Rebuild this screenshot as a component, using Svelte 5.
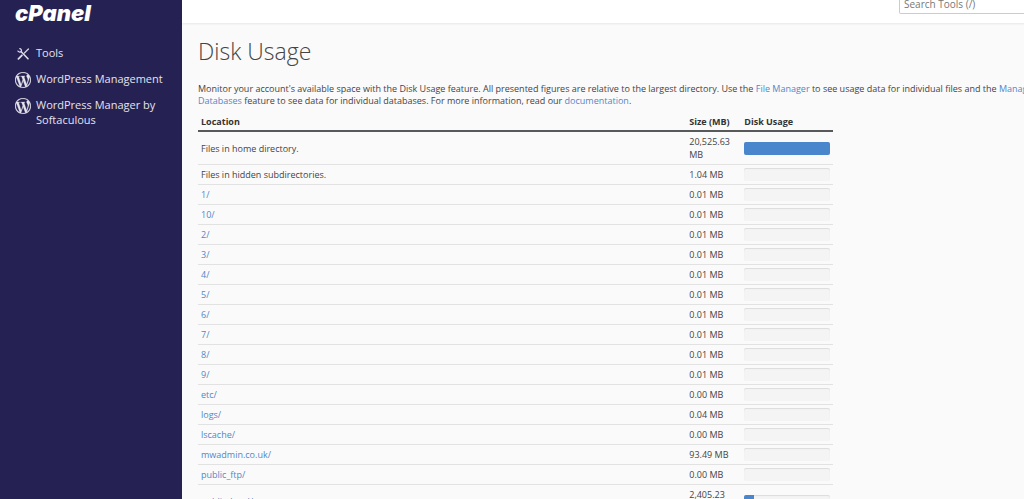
<script lang="ts">
  interface Usage {
    name: string;
    size: string;
    percent: number;
    link: boolean;
  }

  const dir = (name: string, size: string, percent = 0): Usage => ({ name, size, percent, link: true });

  const rows: Usage[] = [
    { name: 'Files in home directory.', size: '20,525.63 MB', percent: 100, link: false },
    { name: 'Files in hidden subdirectories.', size: '1.04 MB', percent: 0, link: false },
    dir('1/', '0.01 MB'),
    dir('10/', '0.01 MB'),
    dir('2/', '0.01 MB'),
    dir('3/', '0.01 MB'),
    dir('4/', '0.01 MB'),
    dir('5/', '0.01 MB'),
    dir('6/', '0.01 MB'),
    dir('7/', '0.01 MB'),
    dir('8/', '0.01 MB'),
    dir('9/', '0.01 MB'),
    dir('etc/', '0.00 MB'),
    dir('logs/', '0.04 MB'),
    dir('lscache/', '0.00 MB'),
    dir('mwadmin.co.uk/', '93.49 MB'),
    dir('public_ftp/', '0.00 MB'),
    dir('public_html/', '2,405.23 MB', 11.7)
  ];

  const nav = [
    { label: 'Tools', icon: 'tools' },
    { label: 'WordPress Management', icon: 'wordpress' },
    { label: 'WordPress Manager by Softaculous', icon: 'wordpress' }
  ];

  let search = $state('');
</script>

<div class="layout">
  <aside>
    <a class="logo" href="#home">cPanel</a>
    <nav>
      {#each nav as item}
        <a href="#{item.icon}">
          {#if item.icon === 'tools'}
            <svg class="icon" viewBox="0 0 16 16" aria-hidden="true">
              <g fill="none" stroke="#dcdbe6" stroke-linecap="round">
                <path d="M4.8 2.6c1.4.5 2 1.7 1.5 2.9-.8.9-2.2.8-3.3-.4" stroke-width="1.3" />
                <path d="M6.2 5.8l6.8 7" stroke-width="1.6" />
                <path d="M13.4 3L9.4 7" stroke-width="1.2" />
                <path d="M6.9 9.3l-3.5 3.5" stroke-width="1.8" />
              </g>
            </svg>
          {:else}
            <svg class="icon" viewBox="0 0 24 24" aria-hidden="true">
              <path fill="#e4e3ec" stroke="#e4e3ec" stroke-width=".4" d="M21.469 6.825c.84 1.537 1.318 3.3 1.318 5.175 0 3.979-2.156 7.456-5.363 9.325l3.295-9.527c.615-1.54.82-2.771.82-3.864 0-.405-.026-.78-.07-1.11m-7.981.105c.647-.03 1.232-.105 1.232-.105.582-.075.514-.93-.067-.899 0 0-1.755.135-2.88.135-1.064 0-2.85-.15-2.85-.15-.585-.03-.661.855-.075.885 0 0 .54.061 1.125.09l1.68 4.605-2.37 7.08L5.354 6.9c.649-.03 1.234-.1 1.234-.1.585-.075.516-.93-.065-.896 0 0-1.746.138-2.874.138-.2 0-.438-.008-.69-.015C4.911 3.15 8.235 1.215 12 1.215c2.809 0 5.365 1.072 7.286 2.833-.046-.003-.091-.009-.141-.009-1.06 0-1.812.923-1.812 1.914 0 .89.513 1.643 1.06 2.531.411.72.89 1.643.89 2.977 0 .915-.354 1.994-.821 3.479l-1.075 3.585-3.9-11.61.001.014zM12 22.784c-1.059 0-2.081-.153-3.048-.437l3.237-9.406 3.315 9.087c.024.053.05.101.078.149-1.12.393-2.325.609-3.582.609M1.211 12c0-1.564.336-3.05.935-4.39L7.29 21.709C3.694 19.96 1.212 16.271 1.211 12M12 0C5.385 0 0 5.385 0 12s5.385 12 12 12 12-5.385 12-12S18.615 0 12 0" />
            </svg>
          {/if}
          <span>{item.label}</span>
        </a>
      {/each}
    </nav>
  </aside>

  <div class="page">
    <header>
      <input type="text" aria-label="Search Tools" placeholder="Search Tools (/)" bind:value={search} />
    </header>

    <main>
      <h1>Disk Usage</h1>
      <p>
        Monitor your account's available space with the Disk Usage feature. All presented figures are relative to the
        largest directory. Use the <a href="#files">File Manager</a> to see usage data for individual files and the
        <a href="#databases">Manage My Databases</a> feature to see data for individual databases. For more information,
        read our <a href="#docs">documentation</a>.
      </p>

      <table>
        <thead>
          <tr>
            <th>Location</th>
            <th class="size">Size (MB)</th>
            <th class="usage">Disk Usage</th>
          </tr>
        </thead>
        <tbody>
          {#each rows as row}
            <tr>
              <td>
                {#if row.link}<a href="#{row.name}">{row.name}</a>{:else}{row.name}{/if}
              </td>
              <td>{row.size}</td>
              <td>
                <div class="bar">
                  {#if row.percent > 0}
                    <div class="fill" style="width: {row.percent}%"></div>
                  {/if}
                </div>
              </td>
            </tr>
          {/each}
        </tbody>
      </table>
    </main>
  </div>
</div>

<style>
  :global(body) {
    overflow: hidden;
    background: #fafafa;
  }
  .layout {
    display: flex;
    min-width: 1060px;
    min-height: 100vh;
    font-family: "Open Sans", sans-serif;
    font-size: 9px;
    line-height: 13px;
    color: #444;
  }
  a {
    color: #5486c9;
    text-decoration: none;
  }

  aside {
    flex: 0 0 182px;
    box-sizing: border-box;
    padding: 0 15px;
    background: #262153;
  }
  .logo {
    display: block;
    height: 26px;
    line-height: 26px;
    font-family: Inter, sans-serif;
    font-size: 22px;
    font-weight: 900;
    font-style: italic;
    color: #fff;
  }
  nav {
    display: flex;
    flex-direction: column;
    gap: 9px;
    padding-top: 19px;
  }
  nav a {
    display: flex;
    gap: 5px;
    font-size: 11px;
    line-height: 15px;
    color: #e4e3ec;
  }
  .icon {
    flex: none;
    width: 16px;
    height: 16px;
    margin-top: 1px;
  }

  .page {
    flex: 1;
    min-width: 0;
  }
  header {
    display: flex;
    justify-content: flex-end;
    height: 23px;
    background: #fff;
    box-shadow: 0 1px 2px rgba(0, 0, 0, 0.08);
  }
  header input {
    box-sizing: border-box;
    width: 161px;
    height: 14px;
    padding: 0 4px 5px;
    border: 1px solid #ccc;
    border-top: 0;
    border-radius: 0 0 2px 2px;
    background: #fff;
    font-family: inherit;
    font-size: 10px;
    line-height: 15px;
    color: #444;
  }
  header input::placeholder {
    color: #777;
  }

  main {
    padding: 12px 15px 0 16px;
  }
  h1 {
    margin: 0;
    font-size: 23px;
    font-weight: 300;
    line-height: 32px;
  }
  p {
    margin: 16px -10px 5px 0;
    line-height: 12px;
  }

  table {
    width: 75%;
    table-layout: fixed;
    border-collapse: separate;
    border-spacing: 0;
  }
  th,
  td {
    padding: 3px;
    text-align: left;
    vertical-align: middle;
  }
  th {
    padding-bottom: 2px;
    border-bottom: 2px solid #58595b;
    font-weight: 700;
    color: #333;
  }
  td {
    border-bottom: 1px solid #e2e2e2;
  }
  .size {
    width: 49px;
  }
  .usage {
    width: 86px;
  }
  .bar {
    height: 13px;
    overflow: hidden;
    border-radius: 2px;
    background: #f4f4f4;
    box-shadow: inset 0 1px 1px rgba(0, 0, 0, 0.1);
  }
  .fill {
    height: 100%;
    background: #4a86cb;
  }
</style>
